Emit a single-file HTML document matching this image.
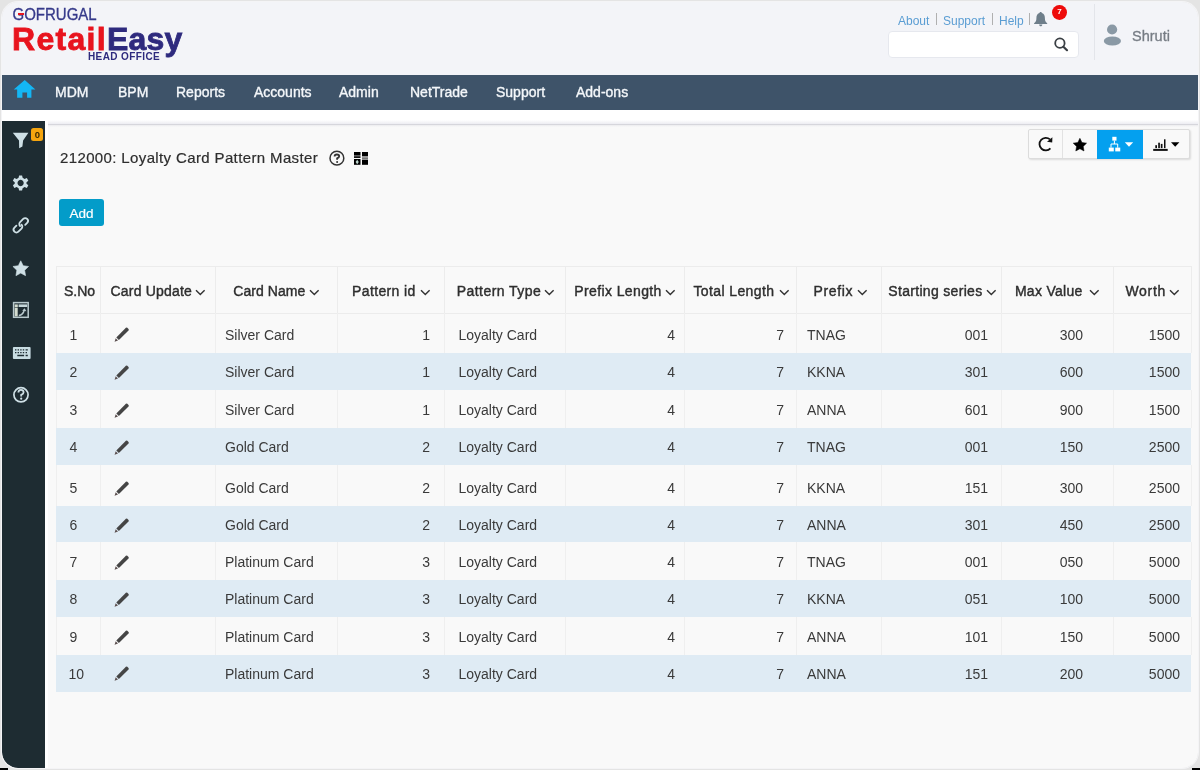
<!DOCTYPE html>
<html><head><meta charset="utf-8">
<style>
*{box-sizing:border-box;margin:0;padding:0}
html,body{width:1200px;height:770px;overflow:hidden;background:#f3f4f8;font-family:"Liberation Sans",sans-serif;position:relative}
.abs{position:absolute}
.nav{position:absolute;left:2px;top:75px;width:1196px;height:35px;background:#3e5369}
.nav span{position:absolute;top:8px;color:#f4f7fa;-webkit-text-stroke:0.35px #f4f7fa;font-size:14px;line-height:18px;white-space:nowrap}
.link{position:absolute;top:13px;color:#5a9dd3;font-size:12px;line-height:16px;white-space:nowrap}
.sep{position:absolute;top:13px;width:1px;height:12px;background:#b0b0b0}
.th{position:absolute;font-size:14px;line-height:18px;color:#333;white-space:nowrap;letter-spacing:0.1px;-webkit-text-stroke:0.4px #2e2e2e;color:#2e2e2e}
.td{position:absolute;font-size:14px;line-height:18px;color:#3a3a3a;white-space:nowrap}
.frame{position:absolute;left:2px;top:2px;width:1196px;height:765.5px;border-radius:16px;box-shadow:0 0 0 1px #f4f4f6,0 0 0 30px #e4e4e4;pointer-events:none}
</style></head>
<body>
<div id="wrap" style="position:absolute;left:0;top:0;width:1200px;height:770px;will-change:transform">
  <!-- logo -->
  <div class="abs" style="left:12.5px;top:6px;font-size:15px;line-height:17px;color:#363a8a;letter-spacing:0px;transform:scaleY(1.12);transform-origin:50% 80%;-webkit-text-stroke:0.3px #363a8a">GOFRUGAL</div>
  <div class="abs" style="left:17.6px;top:13.4px;width:6.2px;height:1.9px;background:#e8141e"></div>
  <div class="abs" style="left:12px;top:21px;font-size:32px;font-weight:bold;line-height:36px;-webkit-text-stroke:0.8px currentColor"><span style="color:#e8141e;letter-spacing:1.3px">Retail</span><span style="color:#2e2a7e;letter-spacing:0.2px">Easy</span></div>
  <div class="abs" style="left:88px;top:51px;font-size:10px;font-weight:bold;color:#2e2a7e;line-height:11px;letter-spacing:0.4px">HEAD OFFICE</div>

  <!-- top links -->
  <span class="link" style="left:898px">About</span>
  <div class="sep" style="left:936px"></div>
  <span class="link" style="left:943px">Support</span>
  <div class="sep" style="left:992px"></div>
  <span class="link" style="left:999px">Help</span>
  <div class="sep" style="left:1029px"></div>
  <div class="abs" style="left:888px;top:31px;width:191px;height:27px;background:#fff;border-radius:4px;border:1px solid #e6e8ee"></div>
  <svg class="abs" style="left:1030px;top:8px" width="22" height="22" viewBox="0 0 22 22">
    <path d="M10.65 3.9 C11.5 3.9 11.9 4.5 11.9 5.1 C14.2 5.8 14.9 7.8 14.9 10.2 C14.9 12.8 15.6 14.1 17.2 15.2 L17.2 15.9 L4.1 15.9 L4.1 15.2 C5.7 14.1 6.4 12.8 6.4 10.2 C6.4 7.8 7.1 5.8 9.4 5.1 C9.4 4.5 9.8 3.9 10.65 3.9 Z" fill="#6e7e8a"/>
    <path d="M9.1 16.4 L12.3 16.4 C12.3 17.6 11.5 18.2 10.7 18.2 C9.9 18.2 9.1 17.6 9.1 16.4 Z" fill="#6e7e8a"/>
  </svg>
  <div class="abs" style="left:1052.2px;top:4.8px;width:14.8px;height:14.8px;border-radius:50%;background:#ee0b0b;color:#fff;font-size:8px;font-weight:bold;line-height:14.8px;text-align:center">7</div>
  <svg class="abs" style="left:1050px;top:34px" width="22" height="22" viewBox="0 0 22 22">
    <circle cx="9.9" cy="9.15" r="4.7" fill="none" stroke="#3a3f44" stroke-width="1.8"/>
    <path d="M13.4 12.7 L17 16.2" stroke="#3a3f44" stroke-width="2.2" stroke-linecap="round"/>
  </svg>
  <svg class="abs" style="left:1100px;top:20px" width="26" height="30" viewBox="0 0 26 30">
    <circle cx="12.1" cy="9.5" r="5.1" fill="#8a99a5"/>
    <ellipse cx="12.4" cy="21" rx="8.6" ry="4.6" fill="#8a99a5"/>
  </svg>
  <div class="abs" style="left:1094px;top:4px;width:1px;height:56px;background:#e3e5ea"></div>
  <span class="abs" style="left:1132px;top:28px;font-size:14.5px;line-height:17px;color:#767c84;-webkit-text-stroke:0.3px #767c84">Shruti</span>

  <!-- nav -->
  <div class="nav">
    <span style="left:53px">MDM</span>
    <span style="left:116px">BPM</span>
    <span style="left:174px">Reports</span>
    <span style="left:252px">Accounts</span>
    <span style="left:337px">Admin</span>
    <span style="left:408px">NetTrade</span>
    <span style="left:494px">Support</span>
    <span style="left:574px">Add-ons</span>
  </div>
  <div class="abs" style="left:2px;top:110px;width:1196px;height:14px;background:#fff"></div>
  <div class="abs" style="left:45px;top:110px;width:4px;height:660px;background:#fff"></div>
  <div class="abs" style="left:2px;top:121px;width:43px;height:649px;background:#1e2c32"></div>
  <div class="abs" style="left:48px;top:120px;width:1152px;height:4px;background:linear-gradient(#fff,#ededf2)"></div>
  <div class="abs" style="left:48px;top:124px;width:1152px;height:646px;background:#f9f9f9;border-top:1px solid #d6d6dc"></div>
  <div class="abs" style="left:48px;top:125px;width:1152px;height:2px;background:linear-gradient(#ececee,#f9f9f9)"></div>

  <!-- title -->
  <span class="abs" style="left:60px;top:148.5px;font-size:15px;line-height:18px;color:#2e2e2e;letter-spacing:0.37px;-webkit-text-stroke:0.2px #2e2e2e">212000: Loyalty Card Pattern Master</span>
  <div class="abs" style="left:59px;top:199px;width:45px;height:27px;background:#039cc9;border-radius:3px;color:#fff;font-size:13.5px;line-height:29px;text-align:center;-webkit-text-stroke:0.2px #fff">Add</div>


  <!-- home icon -->
  <svg class="abs" style="left:0;top:0" width="40" height="110" viewBox="0 0 40 110">
    <path d="M24.75 80.1 L35.4 89.6 L31.4 89.6 L31.4 97.8 L27.1 97.8 L27.1 92.4 L22.4 92.4 L22.4 97.8 L17.15 97.8 L17.15 89.6 L13.7 89.6 Z" fill="#14b6f4"/>
  </svg>
  <!-- sidebar icons -->
  <svg class="abs" style="left:0;top:120px" width="46" height="300" viewBox="0 120 46 300">
    <path d="M12.8 132.8 L28.4 132.8 L23.1 140.4 L22.4 146.5 L19.2 148.2 L19 140.4 Z" fill="#cfe0e6"/>
    <g transform="translate(20.6 183) scale(0.92)" fill="#cfe0e6">
      <path d="M-1.6 -8.2 L1.6 -8.2 L2.2 -5.6 L4.3 -4.4 L6.8 -5.3 L8.4 -2.5 L6.4 -0.9 L6.4 0.9 L8.4 2.5 L6.8 5.3 L4.3 4.4 L2.2 5.6 L1.6 8.2 L-1.6 8.2 L-2.2 5.6 L-4.3 4.4 L-6.8 5.3 L-8.4 2.5 L-6.4 0.9 L-6.4 -0.9 L-8.4 -2.5 L-6.8 -5.3 L-4.3 -4.4 L-2.2 -5.6 Z M0 -3.4 A3.4 3.4 0 1 0 0.01 -3.4 Z" fill-rule="evenodd"/>
    </g>
    <g transform="translate(20.8 225.3) rotate(-45)" fill="none" stroke="#cfe0e6" stroke-width="1.8" stroke-linecap="round">
      <path d="M3.4 2.8 L6.2 2.8 A2.8 2.8 0 0 0 6.2 -2.8 L1.8 -2.8 A2.8 2.8 0 0 0 -1 0"/>
      <path d="M-3.4 -2.8 L-6.2 -2.8 A2.8 2.8 0 0 0 -6.2 2.8 L-1.8 2.8 A2.8 2.8 0 0 0 1 0"/>
    </g>
    <path d="M20.75 260.80 L23.16 265.68 L28.55 266.47 L24.65 270.27 L25.57 275.63 L20.75 273.10 L15.93 275.63 L16.85 270.27 L12.95 266.47 L18.34 265.68 Z" fill="#cfe0e6" stroke="#cfe0e6" stroke-width="0.6" stroke-linejoin="round"/>
    <rect x="13.6" y="302.6" width="14.6" height="14.7" fill="none" stroke="#b9c9cd" stroke-width="1.5"/>
    <rect x="14.7" y="304.4" width="3.1" height="2.6" fill="#d4dcd0"/><rect x="18.6" y="304.4" width="8.6" height="2.6" fill="#c5d6da"/>
    <rect x="14.7" y="307.6" width="3" height="8.8" fill="#d4dcd0"/>
    <path d="M18.8 315.5 Q23 315 24.3 310" fill="none" stroke="#b9c9cd" stroke-width="1.5"/>
    <path d="M22.2 310.8 L24.6 308.2 L26.4 311.2 Z" fill="#b9c9cd"/>
    <rect x="12.9" y="346.9" width="17.7" height="12" rx="1" fill="#c8dce2"/>
    <path d="M15 349.8 h1.4 M17.6 349.8 h1.4 M20.2 349.8 h1.4 M22.8 349.8 h1.4 M25.6 349.8 h2.2 M15 352.6 h1.4 M17.6 352.6 h1.4 M20.2 352.6 h1.4 M22.8 352.6 h1.4 M25.6 352.6 h1.4 M17.3 355.5 h6.8 M25.6 355.5 h2.2" stroke="#1e2c32" stroke-width="1.3"/>
    <circle cx="21" cy="394.8" r="7.1" fill="none" stroke="#cfe0e6" stroke-width="1.7"/>
    <path d="M18.4 392.6 Q18.4 389.8 21 389.8 Q23.6 389.8 23.6 392.3 Q23.6 393.8 21.2 394.9 L21.2 396.4" fill="none" stroke="#cfe0e6" stroke-width="1.8"/>
    <circle cx="21.2" cy="398.7" r="1.1" fill="#cfe0e6"/>
  </svg>
  <div class="abs" style="left:31.3px;top:128.1px;width:11.7px;height:13.4px;border-radius:2.5px;background:#f5a50f;color:#3d2a00;font-size:9.5px;font-weight:bold;line-height:13.4px;text-align:center;padding-left:0.6px">0</div>

  <!-- title icons -->
  <svg class="abs" style="left:320px;top:140px" width="60" height="30" viewBox="320 140 60 30">
    <circle cx="336.9" cy="158.2" r="6.9" fill="none" stroke="#333" stroke-width="1.5"/>
    <path d="M334.6 156.4 Q334.6 154.5 336.9 154.5 Q339.2 154.5 339.2 156.3 Q339.2 157.5 337.1 158.4 L337.1 159.8" fill="none" stroke="#333" stroke-width="1.8"/>
    <circle cx="337.1" cy="161.9" r="1" fill="#333"/>
    <rect x="354" y="152" width="6.5" height="3.6" fill="#000"/>
    <rect x="354" y="156.2" width="6.5" height="1.8" fill="#111"/>
    <rect x="354" y="159" width="6.5" height="5.8" fill="#000"/>
    <path d="M357.2 159.8 L358.8 162 L357.2 164.2 L355.6 162 Z" fill="#bfd8d0"/>
    <rect x="362" y="152" width="6" height="4.4" fill="#000"/>
    <rect x="362" y="157.4" width="6" height="1.4" fill="#555"/>
    <rect x="362" y="159.6" width="6" height="5.2" fill="#000"/>
  </svg>

  <!-- toolbar -->
  <div class="abs" style="left:1028px;top:129px;width:161.5px;height:30px;border:1px solid #dcdcdc;border-radius:2px;background:#f9f9f9;box-shadow:1px 1px 2px rgba(0,0,0,0.12)"></div>
  <div class="abs" style="left:1062px;top:130px;width:1px;height:28px;background:#e2e2e2"></div>
  <div class="abs" style="left:1097px;top:129.5px;width:45.5px;height:29px;background:#04a0ef"></div>
  <svg class="abs" style="left:1028px;top:129px" width="161" height="30" viewBox="1028 129 161 30">
    <path d="M1050 139.4 A6.3 6.3 0 1 0 1050.4 148.4" fill="none" stroke="#111" stroke-width="1.8"/>
    <path d="M1052.4 137.2 L1052.2 142.6 L1047 141.8 Z" fill="#111"/>
    <path d="M1079.90 138.30 L1081.96 142.47 L1086.56 143.14 L1083.23 146.38 L1084.01 150.96 L1079.90 148.80 L1075.79 150.96 L1076.57 146.38 L1073.24 143.14 L1077.84 142.47 Z" fill="#000" stroke="#000" stroke-width="0.5" stroke-linejoin="round"/>
    <rect x="1112.3" y="136.8" width="4.2" height="3.8" fill="#fff"/>
    <path d="M1114.4 140.6 V144 M1111 147.7 V144 H1117.7 V147.7" fill="none" stroke="#fff" stroke-width="1"/>
    <rect x="1108.8" y="147.6" width="5" height="3.8" fill="#fff"/>
    <rect x="1115.25" y="147.6" width="5" height="3.8" fill="#fff"/>
    <path d="M1124.8 142.3 L1133.2 142.3 L1129 146.8 Z" fill="#fff"/>
    <rect x="1153.2" y="148.9" width="14.5" height="2" fill="#111"/>
    <rect x="1155.3" y="145.2" width="1.7" height="2.9" fill="#111"/>
    <rect x="1158.2" y="142.7" width="1.7" height="5.4" fill="#111"/>
    <rect x="1160.8" y="143.9" width="1.7" height="4.2" fill="#111"/>
    <rect x="1164" y="139.3" width="1.5" height="8.8" fill="#111"/>
    <path d="M1171 142.3 L1179.4 142.3 L1175.2 146.8 Z" fill="#000"/>
  </svg>

<div class="abs" style="left:56px;top:266px;width:1135px;height:426px;background:#f9f9f9"></div>
<div class="abs" style="left:56px;top:353px;width:1135px;height:37px;background:#dfebf4"></div>
<div class="abs" style="left:56px;top:428px;width:1135px;height:37px;background:#dfebf4"></div>
<div class="abs" style="left:56px;top:506px;width:1135px;height:36px;background:#dfebf4"></div>
<div class="abs" style="left:56px;top:580px;width:1135px;height:37px;background:#dfebf4"></div>
<div class="abs" style="left:56px;top:655px;width:1135px;height:37px;background:#dfebf4"></div>
<div class="abs" style="left:56px;top:266px;width:1135px;height:1px;background:#ececec"></div>
<div class="abs" style="left:56px;top:312.5px;width:1135px;height:1px;background:#ececec"></div>
<div class="abs" style="left:56px;top:266px;width:1px;height:46.5px;background:#ececec"></div>
<div class="abs" style="left:56px;top:312.5px;width:1px;height:40.5px;background:#efefef"></div>
<div class="abs" style="left:56px;top:390px;width:1px;height:38px;background:#efefef"></div>
<div class="abs" style="left:56px;top:465px;width:1px;height:41px;background:#efefef"></div>
<div class="abs" style="left:56px;top:542px;width:1px;height:38px;background:#efefef"></div>
<div class="abs" style="left:56px;top:617px;width:1px;height:38px;background:#efefef"></div>
<div class="abs" style="left:100px;top:266px;width:1px;height:46.5px;background:#ececec"></div>
<div class="abs" style="left:100px;top:312.5px;width:1px;height:40.5px;background:#efefef"></div>
<div class="abs" style="left:100px;top:390px;width:1px;height:38px;background:#efefef"></div>
<div class="abs" style="left:100px;top:465px;width:1px;height:41px;background:#efefef"></div>
<div class="abs" style="left:100px;top:542px;width:1px;height:38px;background:#efefef"></div>
<div class="abs" style="left:100px;top:617px;width:1px;height:38px;background:#efefef"></div>
<div class="abs" style="left:215px;top:266px;width:1px;height:46.5px;background:#ececec"></div>
<div class="abs" style="left:215px;top:312.5px;width:1px;height:40.5px;background:#efefef"></div>
<div class="abs" style="left:215px;top:390px;width:1px;height:38px;background:#efefef"></div>
<div class="abs" style="left:215px;top:465px;width:1px;height:41px;background:#efefef"></div>
<div class="abs" style="left:215px;top:542px;width:1px;height:38px;background:#efefef"></div>
<div class="abs" style="left:215px;top:617px;width:1px;height:38px;background:#efefef"></div>
<div class="abs" style="left:337px;top:266px;width:1px;height:46.5px;background:#ececec"></div>
<div class="abs" style="left:337px;top:312.5px;width:1px;height:40.5px;background:#efefef"></div>
<div class="abs" style="left:337px;top:390px;width:1px;height:38px;background:#efefef"></div>
<div class="abs" style="left:337px;top:465px;width:1px;height:41px;background:#efefef"></div>
<div class="abs" style="left:337px;top:542px;width:1px;height:38px;background:#efefef"></div>
<div class="abs" style="left:337px;top:617px;width:1px;height:38px;background:#efefef"></div>
<div class="abs" style="left:444px;top:266px;width:1px;height:46.5px;background:#ececec"></div>
<div class="abs" style="left:444px;top:312.5px;width:1px;height:40.5px;background:#efefef"></div>
<div class="abs" style="left:444px;top:390px;width:1px;height:38px;background:#efefef"></div>
<div class="abs" style="left:444px;top:465px;width:1px;height:41px;background:#efefef"></div>
<div class="abs" style="left:444px;top:542px;width:1px;height:38px;background:#efefef"></div>
<div class="abs" style="left:444px;top:617px;width:1px;height:38px;background:#efefef"></div>
<div class="abs" style="left:565px;top:266px;width:1px;height:46.5px;background:#ececec"></div>
<div class="abs" style="left:565px;top:312.5px;width:1px;height:40.5px;background:#efefef"></div>
<div class="abs" style="left:565px;top:390px;width:1px;height:38px;background:#efefef"></div>
<div class="abs" style="left:565px;top:465px;width:1px;height:41px;background:#efefef"></div>
<div class="abs" style="left:565px;top:542px;width:1px;height:38px;background:#efefef"></div>
<div class="abs" style="left:565px;top:617px;width:1px;height:38px;background:#efefef"></div>
<div class="abs" style="left:684px;top:266px;width:1px;height:46.5px;background:#ececec"></div>
<div class="abs" style="left:684px;top:312.5px;width:1px;height:40.5px;background:#efefef"></div>
<div class="abs" style="left:684px;top:390px;width:1px;height:38px;background:#efefef"></div>
<div class="abs" style="left:684px;top:465px;width:1px;height:41px;background:#efefef"></div>
<div class="abs" style="left:684px;top:542px;width:1px;height:38px;background:#efefef"></div>
<div class="abs" style="left:684px;top:617px;width:1px;height:38px;background:#efefef"></div>
<div class="abs" style="left:796px;top:266px;width:1px;height:46.5px;background:#ececec"></div>
<div class="abs" style="left:796px;top:312.5px;width:1px;height:40.5px;background:#efefef"></div>
<div class="abs" style="left:796px;top:390px;width:1px;height:38px;background:#efefef"></div>
<div class="abs" style="left:796px;top:465px;width:1px;height:41px;background:#efefef"></div>
<div class="abs" style="left:796px;top:542px;width:1px;height:38px;background:#efefef"></div>
<div class="abs" style="left:796px;top:617px;width:1px;height:38px;background:#efefef"></div>
<div class="abs" style="left:881px;top:266px;width:1px;height:46.5px;background:#ececec"></div>
<div class="abs" style="left:881px;top:312.5px;width:1px;height:40.5px;background:#efefef"></div>
<div class="abs" style="left:881px;top:390px;width:1px;height:38px;background:#efefef"></div>
<div class="abs" style="left:881px;top:465px;width:1px;height:41px;background:#efefef"></div>
<div class="abs" style="left:881px;top:542px;width:1px;height:38px;background:#efefef"></div>
<div class="abs" style="left:881px;top:617px;width:1px;height:38px;background:#efefef"></div>
<div class="abs" style="left:1001px;top:266px;width:1px;height:46.5px;background:#ececec"></div>
<div class="abs" style="left:1001px;top:312.5px;width:1px;height:40.5px;background:#efefef"></div>
<div class="abs" style="left:1001px;top:390px;width:1px;height:38px;background:#efefef"></div>
<div class="abs" style="left:1001px;top:465px;width:1px;height:41px;background:#efefef"></div>
<div class="abs" style="left:1001px;top:542px;width:1px;height:38px;background:#efefef"></div>
<div class="abs" style="left:1001px;top:617px;width:1px;height:38px;background:#efefef"></div>
<div class="abs" style="left:1113px;top:266px;width:1px;height:46.5px;background:#ececec"></div>
<div class="abs" style="left:1113px;top:312.5px;width:1px;height:40.5px;background:#efefef"></div>
<div class="abs" style="left:1113px;top:390px;width:1px;height:38px;background:#efefef"></div>
<div class="abs" style="left:1113px;top:465px;width:1px;height:41px;background:#efefef"></div>
<div class="abs" style="left:1113px;top:542px;width:1px;height:38px;background:#efefef"></div>
<div class="abs" style="left:1113px;top:617px;width:1px;height:38px;background:#efefef"></div>
<div class="abs" style="left:1191px;top:266px;width:1px;height:46.5px;background:#ececec"></div>
<div class="abs" style="left:1191px;top:312.5px;width:1px;height:40.5px;background:#efefef"></div>
<div class="abs" style="left:1191px;top:390px;width:1px;height:38px;background:#efefef"></div>
<div class="abs" style="left:1191px;top:465px;width:1px;height:41px;background:#efefef"></div>
<div class="abs" style="left:1191px;top:542px;width:1px;height:38px;background:#efefef"></div>
<div class="abs" style="left:1191px;top:617px;width:1px;height:38px;background:#efefef"></div>
<span class="th" style="left:64.0px;top:282px;letter-spacing:0.000px">S.No</span>
<span class="th" style="left:110.5px;top:282px;letter-spacing:0.200px">Card Update</span>
<svg class="abs" style="left:195.2px;top:288.5px" width="11" height="8" viewBox="0 0 11 8"><path d="M1 1.2 L5.3 5.6 L9.6 1.2" fill="none" stroke="#333" stroke-width="1.4"/></svg>
<span class="th" style="left:233.3px;top:282px;letter-spacing:0.050px">Card Name</span>
<svg class="abs" style="left:308.7px;top:288.5px" width="11" height="8" viewBox="0 0 11 8"><path d="M1 1.2 L5.3 5.6 L9.6 1.2" fill="none" stroke="#333" stroke-width="1.4"/></svg>
<span class="th" style="left:352.0px;top:282px;letter-spacing:0.378px">Pattern id</span>
<svg class="abs" style="left:419.5px;top:288.5px" width="11" height="8" viewBox="0 0 11 8"><path d="M1 1.2 L5.3 5.6 L9.6 1.2" fill="none" stroke="#333" stroke-width="1.4"/></svg>
<span class="th" style="left:456.8px;top:282px;letter-spacing:0.436px">Pattern Type</span>
<svg class="abs" style="left:544.0px;top:288.5px" width="11" height="8" viewBox="0 0 11 8"><path d="M1 1.2 L5.3 5.6 L9.6 1.2" fill="none" stroke="#333" stroke-width="1.4"/></svg>
<span class="th" style="left:574.3px;top:282px;letter-spacing:0.383px">Prefix Length</span>
<svg class="abs" style="left:665.3px;top:288.5px" width="11" height="8" viewBox="0 0 11 8"><path d="M1 1.2 L5.3 5.6 L9.6 1.2" fill="none" stroke="#333" stroke-width="1.4"/></svg>
<span class="th" style="left:693.4px;top:282px;letter-spacing:0.391px">Total Length</span>
<svg class="abs" style="left:778.5px;top:288.5px" width="11" height="8" viewBox="0 0 11 8"><path d="M1 1.2 L5.3 5.6 L9.6 1.2" fill="none" stroke="#333" stroke-width="1.4"/></svg>
<span class="th" style="left:813.5px;top:282px;letter-spacing:0.640px">Prefix</span>
<svg class="abs" style="left:857.3px;top:288.5px" width="11" height="8" viewBox="0 0 11 8"><path d="M1 1.2 L5.3 5.6 L9.6 1.2" fill="none" stroke="#333" stroke-width="1.4"/></svg>
<span class="th" style="left:888.3px;top:282px;letter-spacing:0.314px">Starting series</span>
<svg class="abs" style="left:986.1px;top:288.5px" width="11" height="8" viewBox="0 0 11 8"><path d="M1 1.2 L5.3 5.6 L9.6 1.2" fill="none" stroke="#333" stroke-width="1.4"/></svg>
<span class="th" style="left:1014.9px;top:282px;letter-spacing:0.300px">Max Value</span>
<svg class="abs" style="left:1088.7px;top:288.5px" width="11" height="8" viewBox="0 0 11 8"><path d="M1 1.2 L5.3 5.6 L9.6 1.2" fill="none" stroke="#333" stroke-width="1.4"/></svg>
<span class="th" style="left:1125.4px;top:282px;letter-spacing:0.725px">Worth</span>
<svg class="abs" style="left:1168.7px;top:288.5px" width="11" height="8" viewBox="0 0 11 8"><path d="M1 1.2 L5.3 5.6 L9.6 1.2" fill="none" stroke="#333" stroke-width="1.4"/></svg>
<span class="td" style="left:69.5px;top:325.6px">1</span>
<svg class="abs" style="left:108px;top:322.4px" width="24" height="24" viewBox="0 0 24 24"><path d="M8.3 15.4 L17.9 5.8 Q18.6 5.2 19.3 5.8 L20.5 7.0 Q21.1 7.7 20.5 8.4 L10.9 18.0 Z" fill="#454545"/><path d="M7.7 16.3 L10.0 18.6 L6.6 19.7 Z" fill="#5c5050"/></svg>
<span class="td" style="left:225px;top:325.6px">Silver Card</span>
<span class="td r" style="right:770px;top:325.6px">1</span>
<span class="td" style="left:458.5px;top:325.6px">Loyalty Card</span>
<span class="td r" style="right:525px;top:325.6px">4</span>
<span class="td r" style="right:416px;top:325.6px">7</span>
<span class="td" style="left:807px;top:325.6px">TNAG</span>
<span class="td r" style="right:212px;top:325.6px">001</span>
<span class="td r" style="right:117px;top:325.6px">300</span>
<span class="td r" style="right:20px;top:325.6px">1500</span>
<span class="td" style="left:69.5px;top:362.7px">2</span>
<svg class="abs" style="left:108px;top:359.5px" width="24" height="24" viewBox="0 0 24 24"><path d="M8.3 15.4 L17.9 5.8 Q18.6 5.2 19.3 5.8 L20.5 7.0 Q21.1 7.7 20.5 8.4 L10.9 18.0 Z" fill="#454545"/><path d="M7.7 16.3 L10.0 18.6 L6.6 19.7 Z" fill="#5c5050"/></svg>
<span class="td" style="left:225px;top:362.7px">Silver Card</span>
<span class="td r" style="right:770px;top:362.7px">1</span>
<span class="td" style="left:458.5px;top:362.7px">Loyalty Card</span>
<span class="td r" style="right:525px;top:362.7px">4</span>
<span class="td r" style="right:416px;top:362.7px">7</span>
<span class="td" style="left:807px;top:362.7px">KKNA</span>
<span class="td r" style="right:212px;top:362.7px">301</span>
<span class="td r" style="right:117px;top:362.7px">600</span>
<span class="td r" style="right:20px;top:362.7px">1500</span>
<span class="td" style="left:69.5px;top:400.95px">3</span>
<svg class="abs" style="left:108px;top:397.75px" width="24" height="24" viewBox="0 0 24 24"><path d="M8.3 15.4 L17.9 5.8 Q18.6 5.2 19.3 5.8 L20.5 7.0 Q21.1 7.7 20.5 8.4 L10.9 18.0 Z" fill="#454545"/><path d="M7.7 16.3 L10.0 18.6 L6.6 19.7 Z" fill="#5c5050"/></svg>
<span class="td" style="left:225px;top:400.95px">Silver Card</span>
<span class="td r" style="right:770px;top:400.95px">1</span>
<span class="td" style="left:458.5px;top:400.95px">Loyalty Card</span>
<span class="td r" style="right:525px;top:400.95px">4</span>
<span class="td r" style="right:416px;top:400.95px">7</span>
<span class="td" style="left:807px;top:400.95px">ANNA</span>
<span class="td r" style="right:212px;top:400.95px">601</span>
<span class="td r" style="right:117px;top:400.95px">900</span>
<span class="td r" style="right:20px;top:400.95px">1500</span>
<span class="td" style="left:69.5px;top:437.7px">4</span>
<svg class="abs" style="left:108px;top:434.5px" width="24" height="24" viewBox="0 0 24 24"><path d="M8.3 15.4 L17.9 5.8 Q18.6 5.2 19.3 5.8 L20.5 7.0 Q21.1 7.7 20.5 8.4 L10.9 18.0 Z" fill="#454545"/><path d="M7.7 16.3 L10.0 18.6 L6.6 19.7 Z" fill="#5c5050"/></svg>
<span class="td" style="left:225px;top:437.7px">Gold Card</span>
<span class="td r" style="right:770px;top:437.7px">2</span>
<span class="td" style="left:458.5px;top:437.7px">Loyalty Card</span>
<span class="td r" style="right:525px;top:437.7px">4</span>
<span class="td r" style="right:416px;top:437.7px">7</span>
<span class="td" style="left:807px;top:437.7px">TNAG</span>
<span class="td r" style="right:212px;top:437.7px">001</span>
<span class="td r" style="right:117px;top:437.7px">150</span>
<span class="td r" style="right:20px;top:437.7px">2500</span>
<span class="td" style="left:69.5px;top:479.0px">5</span>
<svg class="abs" style="left:108px;top:475.8px" width="24" height="24" viewBox="0 0 24 24"><path d="M8.3 15.4 L17.9 5.8 Q18.6 5.2 19.3 5.8 L20.5 7.0 Q21.1 7.7 20.5 8.4 L10.9 18.0 Z" fill="#454545"/><path d="M7.7 16.3 L10.0 18.6 L6.6 19.7 Z" fill="#5c5050"/></svg>
<span class="td" style="left:225px;top:479.0px">Gold Card</span>
<span class="td r" style="right:770px;top:479.0px">2</span>
<span class="td" style="left:458.5px;top:479.0px">Loyalty Card</span>
<span class="td r" style="right:525px;top:479.0px">4</span>
<span class="td r" style="right:416px;top:479.0px">7</span>
<span class="td" style="left:807px;top:479.0px">KKNA</span>
<span class="td r" style="right:212px;top:479.0px">151</span>
<span class="td r" style="right:117px;top:479.0px">300</span>
<span class="td r" style="right:20px;top:479.0px">2500</span>
<span class="td" style="left:69.5px;top:516.1px">6</span>
<svg class="abs" style="left:108px;top:512.9px" width="24" height="24" viewBox="0 0 24 24"><path d="M8.3 15.4 L17.9 5.8 Q18.6 5.2 19.3 5.8 L20.5 7.0 Q21.1 7.7 20.5 8.4 L10.9 18.0 Z" fill="#454545"/><path d="M7.7 16.3 L10.0 18.6 L6.6 19.7 Z" fill="#5c5050"/></svg>
<span class="td" style="left:225px;top:516.1px">Gold Card</span>
<span class="td r" style="right:770px;top:516.1px">2</span>
<span class="td" style="left:458.5px;top:516.1px">Loyalty Card</span>
<span class="td r" style="right:525px;top:516.1px">4</span>
<span class="td r" style="right:416px;top:516.1px">7</span>
<span class="td" style="left:807px;top:516.1px">ANNA</span>
<span class="td r" style="right:212px;top:516.1px">301</span>
<span class="td r" style="right:117px;top:516.1px">450</span>
<span class="td r" style="right:20px;top:516.1px">2500</span>
<span class="td" style="left:69.5px;top:553.4px">7</span>
<svg class="abs" style="left:108px;top:550.2px" width="24" height="24" viewBox="0 0 24 24"><path d="M8.3 15.4 L17.9 5.8 Q18.6 5.2 19.3 5.8 L20.5 7.0 Q21.1 7.7 20.5 8.4 L10.9 18.0 Z" fill="#454545"/><path d="M7.7 16.3 L10.0 18.6 L6.6 19.7 Z" fill="#5c5050"/></svg>
<span class="td" style="left:225px;top:553.4px">Platinum Card</span>
<span class="td r" style="right:770px;top:553.4px">3</span>
<span class="td" style="left:458.5px;top:553.4px">Loyalty Card</span>
<span class="td r" style="right:525px;top:553.4px">4</span>
<span class="td r" style="right:416px;top:553.4px">7</span>
<span class="td" style="left:807px;top:553.4px">TNAG</span>
<span class="td r" style="right:212px;top:553.4px">001</span>
<span class="td r" style="right:117px;top:553.4px">050</span>
<span class="td r" style="right:20px;top:553.4px">5000</span>
<span class="td" style="left:69.5px;top:589.8px">8</span>
<svg class="abs" style="left:108px;top:586.6px" width="24" height="24" viewBox="0 0 24 24"><path d="M8.3 15.4 L17.9 5.8 Q18.6 5.2 19.3 5.8 L20.5 7.0 Q21.1 7.7 20.5 8.4 L10.9 18.0 Z" fill="#454545"/><path d="M7.7 16.3 L10.0 18.6 L6.6 19.7 Z" fill="#5c5050"/></svg>
<span class="td" style="left:225px;top:589.8px">Platinum Card</span>
<span class="td r" style="right:770px;top:589.8px">3</span>
<span class="td" style="left:458.5px;top:589.8px">Loyalty Card</span>
<span class="td r" style="right:525px;top:589.8px">4</span>
<span class="td r" style="right:416px;top:589.8px">7</span>
<span class="td" style="left:807px;top:589.8px">KKNA</span>
<span class="td r" style="right:212px;top:589.8px">051</span>
<span class="td r" style="right:117px;top:589.8px">100</span>
<span class="td r" style="right:20px;top:589.8px">5000</span>
<span class="td" style="left:69.5px;top:628.2px">9</span>
<svg class="abs" style="left:108px;top:625px" width="24" height="24" viewBox="0 0 24 24"><path d="M8.3 15.4 L17.9 5.8 Q18.6 5.2 19.3 5.8 L20.5 7.0 Q21.1 7.7 20.5 8.4 L10.9 18.0 Z" fill="#454545"/><path d="M7.7 16.3 L10.0 18.6 L6.6 19.7 Z" fill="#5c5050"/></svg>
<span class="td" style="left:225px;top:628.2px">Platinum Card</span>
<span class="td r" style="right:770px;top:628.2px">3</span>
<span class="td" style="left:458.5px;top:628.2px">Loyalty Card</span>
<span class="td r" style="right:525px;top:628.2px">4</span>
<span class="td r" style="right:416px;top:628.2px">7</span>
<span class="td" style="left:807px;top:628.2px">ANNA</span>
<span class="td r" style="right:212px;top:628.2px">101</span>
<span class="td r" style="right:117px;top:628.2px">150</span>
<span class="td r" style="right:20px;top:628.2px">5000</span>
<span class="td" style="left:68.5px;top:664.5px">10</span>
<svg class="abs" style="left:108px;top:661.3px" width="24" height="24" viewBox="0 0 24 24"><path d="M8.3 15.4 L17.9 5.8 Q18.6 5.2 19.3 5.8 L20.5 7.0 Q21.1 7.7 20.5 8.4 L10.9 18.0 Z" fill="#454545"/><path d="M7.7 16.3 L10.0 18.6 L6.6 19.7 Z" fill="#5c5050"/></svg>
<span class="td" style="left:225px;top:664.5px">Platinum Card</span>
<span class="td r" style="right:770px;top:664.5px">3</span>
<span class="td" style="left:458.5px;top:664.5px">Loyalty Card</span>
<span class="td r" style="right:525px;top:664.5px">4</span>
<span class="td r" style="right:416px;top:664.5px">7</span>
<span class="td" style="left:807px;top:664.5px">ANNA</span>
<span class="td r" style="right:212px;top:664.5px">151</span>
<span class="td r" style="right:117px;top:664.5px">200</span>
<span class="td r" style="right:20px;top:664.5px">5000</span>

  <div class="frame"></div>
  <div class="abs" style="left:0;top:768px;width:8px;height:2px;background:#000"></div>
  <div class="abs" style="left:1192px;top:768px;width:8px;height:2px;background:#000"></div>
</div>
</body></html>
